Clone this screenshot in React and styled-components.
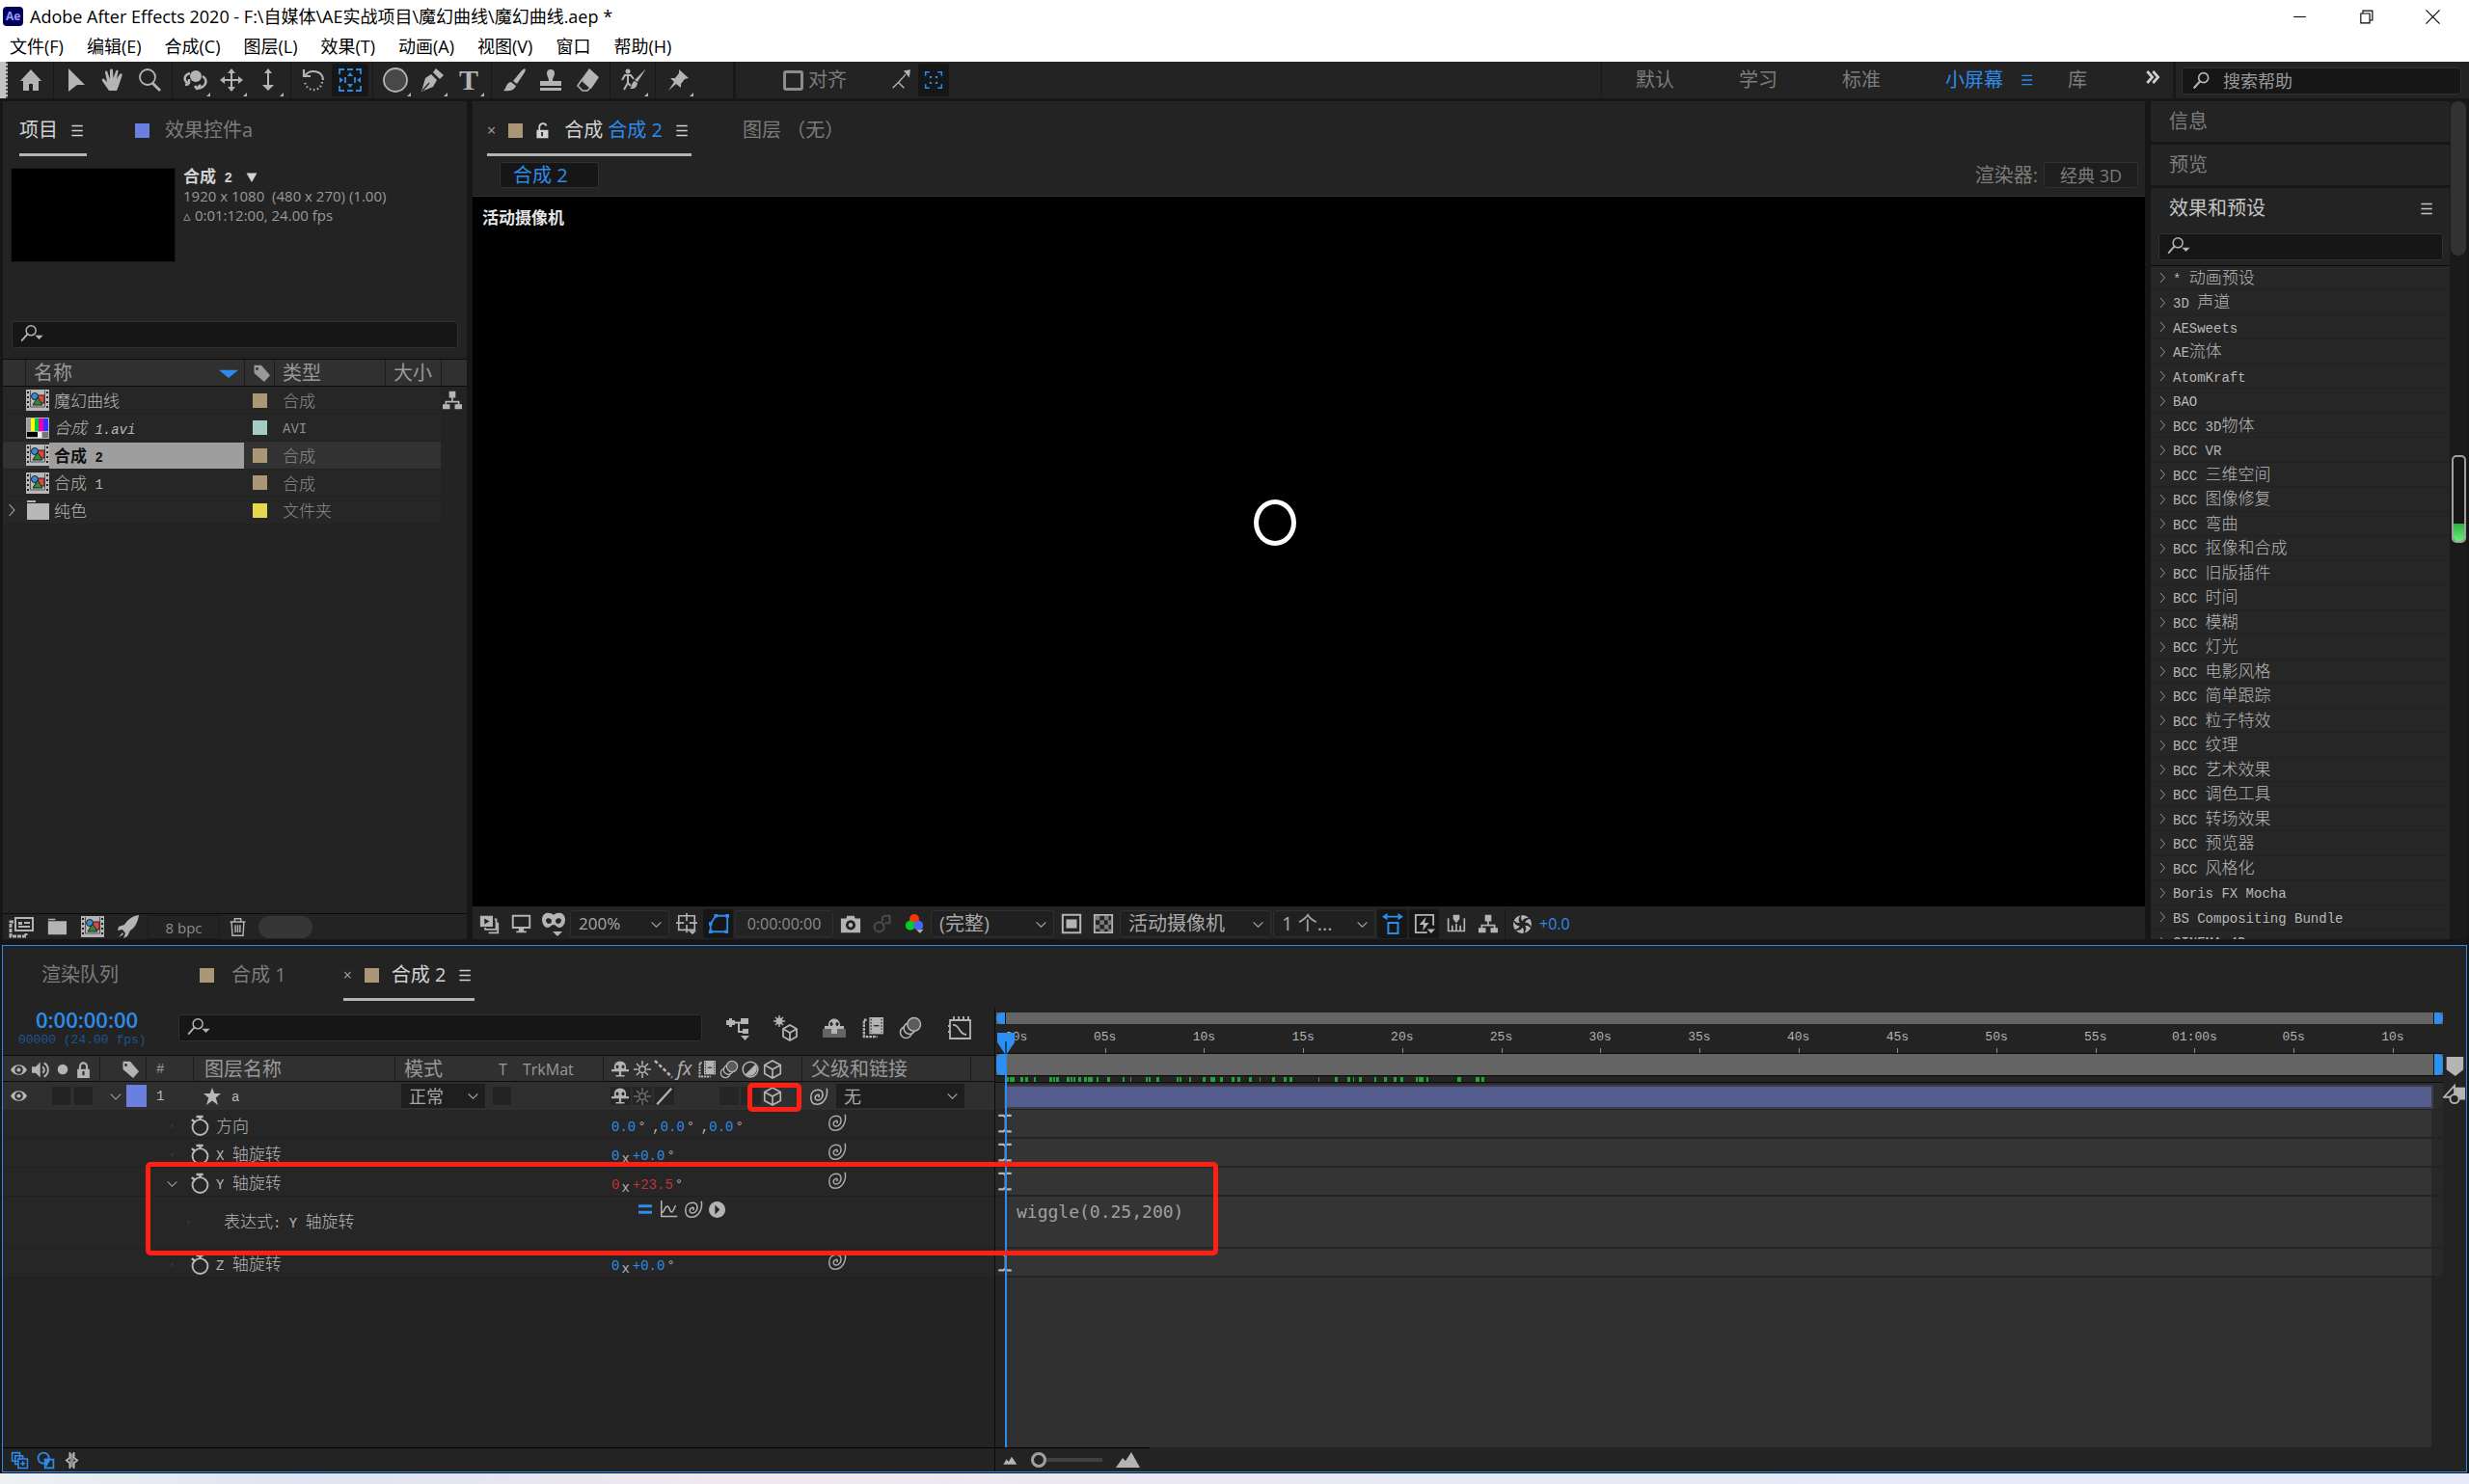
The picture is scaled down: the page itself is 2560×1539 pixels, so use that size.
import React from 'react';
import styled, { createGlobalStyle, css } from 'styled-components';

const GlobalStyle = createGlobalStyle`
  * { box-sizing: border-box; }
  html, body { margin: 0; padding: 0; }
  body {
    background: #161616;
    color: #a8a8a8;
    font-family: "Open Sans", "Noto Sans CJK SC", sans-serif;
    font-size: 18px;
    line-height: 24px;
    overflow: hidden;
  }
  button, input, select {
    font: inherit;
    color: inherit;
    margin: 0;
    padding: 0;
    border: 0;
    border-radius: 0;
    background: none;
    outline: none;
  }
  svg { display: block; flex: none; }
`

const BLUE = '#2d8ceb'
const SAND = '#ab9775'

/* ---------- text helpers ---------- */

const Half = styled.span`
  font-family: "Liberation Mono", monospace;
  font-size: 14px;
  white-space: pre;
`

// list text: full width characters at 17px, latin ones take half of that
const SongText = styled.span`
  font-family: "Noto Sans CJK SC", sans-serif;
  font-size: 17px;
  font-weight: ${p => p.$bold ? 700 : 300};
  font-style: ${p => p.$italic ? 'italic' : 'normal'};
  white-space: pre;
`

function Song({ children, bold, italic }) {
  const parts = children.match(/[\x20-\x7e]+|[^\x20-\x7e]+/g)
  return (
    <SongText $bold={bold} $italic={italic}>
      {parts.map((p, i) => /^[\x20-\x7e]/.test(p) ? <Half key={i}>{p}</Half> : p)}
    </SongText>
  )
}

/* ---------- icons ---------- */

const SvgText = styled.text`
  font-family: ${p => p.$serif ? '"Liberation Serif", serif' : '"Open Sans", sans-serif'};
  font-weight: ${p => p.$bold ? 700 : 400};
  font-style: ${p => p.$italic ? 'italic' : 'normal'};
`

const corner = <path d="M28 25v4h-4z" stroke="none" />
const line = { fill: 'none', stroke: 'currentColor' }

const ICONS = {
  home: <path d="M1 13 12 1l11 12h-3v10h-6v-7h-4v7H4V13z" />,
  arrow: <path d="M4 0l17 17h-8l-9 7z" />,
  hand: <path d="M8 23 1 13c-1-2 1-3 2-2l3 3-2-10c0-2 2-2 2.500 0L9 11 9 2c0-2 3-2 3 0l.5 8L15 3c.5-2 3-1.500 2.500 0l-1.500 8 3-5c1-1.500 3.500-.5 2.500 1.500L18 18l-2 5z" />,
  zoom: <g {...line} strokeWidth="1.800"><circle cx="10" cy="9" r="8" /><path d="M15 15l8 8" strokeWidth="2.800" /></g>,
  orbit: <g><circle cx="13" cy="8" r="6" /><path d="M7 5C0 7 0 13 6 16M6 16l-4 1M6 16l0-5M20 8c6 4 4 12-6 13l-2-3M14 21l4-4" {...line} strokeWidth="2.500" />{corner}</g>,
  pan: <g><path d="M12 0l4 5h-3v6h6V8l5 4-5 4v-3h-6v6h3l-4 5-4-5h3v-6H5v3l-5-4 5-4v3h6V5H8z" />{corner}</g>,
  dolly: <g><path d="M12 0l4 5h-3v12h5l-6 6-6-6h5V5H8z" />{corner}</g>,
  rotate: <g {...line} strokeWidth="2.200"><path d="M3 8c5-8 19-6 19 4" /><path d="M2 1v7h7" /><path d="M21 14c-1 11-17 11-18-1" strokeDasharray="1.500 2.500" /></g>,
  camera3d: <g {...line} strokeWidth="1.800"><path d="M1 6V1h5M18 1h5v5M23 18v5h-5M6 23H1v-5M9 1h6M9 23h6" /><path d="M12 4l3 4H9zM12 20l3-4H9zM1 9l4 3-4 3zM23 9l-4 3 4 3z" fill="currentColor" stroke="none" /><path d="M7 9v6M17 9v6" /></g>,
  ellipse: <g><circle cx="12" cy="12" r="12" fill="#484848" stroke="currentColor" strokeWidth="1.800" />{corner}</g>,
  pen: <g><path d="M1 24 5 10l6-4 6 6-4 7zM13 4l3-4 8 7-4 4z" /><path d="M2 23l7-8" stroke="#232323" strokeWidth="1.300" />{corner}</g>,
  type: <g><SvgText $serif $bold x="2" y="22" fontSize="30">T</SvgText>{corner}</g>,
  brush: <path d="M23 0c1 1 1 2 0 4l-8 12-4-3 9-11zM9 14l5 4c-2 5-8 6-13 5 4-3 2-8 8-9z" />,
  stamp: <path d="M8 5a4 4 0 0 1 8 0c0 3-2 4-2 8h9v5H1v-5h9c0-4-2-5-2-8zM1 20h22v3H1z" />,
  eraser: <g><path d="M14 0l10 9-8 12-10-10z" /><path d="M6 12l9 8-3 3H7l-5-5z" {...line} strokeWidth="1.600" /></g>,
  roto: <g><circle cx="7" cy="3" r="2.500" /><path d="M1 12l3-5h6l3 4M7 7v8l-4 7M7 15l3 3" {...line} strokeWidth="2" /><path d="M26 0l-9 14-3-2zM14 13l3 2c-1 6-4 6-8 6 3-2 1-6 5-8z" />{corner}</g>,
  pin: <g><path d="M13 1l10 9-4 1-4 5v4l-5-4-8 7 6-9-4-4h5l4-5z" />{corner}</g>,
  snap: <g {...line} strokeWidth="1.600"><path d="M2 22l7-7 7 7M9 15l9-10" strokeDasharray="20 2 2 2" /><path d="M17 1l6-1-1 7z" fill="currentColor" /></g>,
  snapBox: <g {...line} strokeWidth="1.800"><path d="M2 7V2h5M17 2h5v5M22 17v5h-5M7 22H2v-5" /><path d="M8 10V8h2M14 8h2v2M16 14v2h-2M10 16H8v-2" /></g>,
  search: <g {...line} strokeWidth="2"><circle cx="14" cy="8" r="6" /><path d="M10 12l-8 9" strokeWidth="2.500" /></g>,
  searchMenu: <g><circle cx="11" cy="7" r="6" {...line} strokeWidth="1.800" /><path d="M7 11l-8 9" stroke="currentColor" strokeWidth="2.200" /><path d="M16 13h10l-5 5z" /></g>,
  menu: <path d="M2 4h16v2H2zM2 11h16v2H2zM2 18h16v2H2z" />,
  chevron: <path d="M3 8l9 9 9-9" {...line} strokeWidth="2" />,
  chevronRight: <path d="M8 2l9 10-9 10" {...line} strokeWidth="2" />,
  more: <path d="M2 3l8 9-8 9M11 3l8 9-8 9" {...line} strokeWidth="4" />,
  lock: <g><path d="M3 11h18v13H3z" /><path d="M7 12V7a5 5 0 0 1 10 0v5" {...line} strokeWidth="3" /><path d="M12 14v6" stroke="#2c2c2c" strokeWidth="3" /></g>,
  unlock: <g><path d="M2 11h17v12H2z" /><path d="M6 12V7c0-7 9-7 10-2" {...line} strokeWidth="2.500" /><path d="M10 14v6" stroke="#232323" strokeWidth="2.500" /></g>,
  tag: <path fillRule="evenodd" d="M2 1l10 0 12 14-8 9L2 12zM6 4a2 2 0 1 0 .1 0z" />,
  sort: <path d="M0 8h24l-12 10z" />,
  down: <path d="M1 3h22L12 22z" />,
  tree: <path d="M8 1h8v8h-3v4h8v4h3v6h-9v-6h4v-2H5v2h4v6H0v-6h3v-4h8V9H8z" />,
  folder: <path d="M1 2h9v2H1zM1 5h23v17H1z" />,
  comp: <g><path d="M0 1h24v22H0z" /><path d="M2 3v18M22 3v18" stroke="#222" strokeWidth="2" strokeDasharray="2 3" /><path d="M4.500 2v17h15V2" fill="none" stroke="#555" /><path d="M12 7h7v8h-7z" fill="#e04444" stroke="#222" /><circle cx="9" cy="8" r="3.500" fill="#3d87dc" stroke="#222" /><path d="M12 9l5 8H7z" fill="#2a8c3b" stroke="#222" /></g>,
  bars: <g><path d="M0 1h24v22H0z" fill="#b4b4b4" /><path d="M1 2h4v13H1z" fill="#9b9b9b" /><path d="M5 2h4v13H5z" fill="#ff0" /><path d="M9 2h4v13H9z" fill="#0c3" /><path d="M13 2h5v13h-5z" fill="#e0a" /><path d="M18 2h5v13h-5z" fill="#33f" /><path d="M1 16h11v5H1z" fill="#000" /><path d="M12 16h4v6h-4z" fill="#eee" /><path d="M17 16h6v6h-6z" fill="#777" /></g>,
  interpret: <g><path d="M6 3h18v13H6z" {...line} strokeWidth="2" /><path d="M9 7h4v3H9zM15 7h6v2h-6zM9 11h12v2H9z" /><path d="M4 7H1v15h16v-3" {...line} strokeWidth="3" strokeDasharray="4 1" /></g>,
  rocket: <path d="M23 0c-7 1-12 5-15 10l-6 2-1 4 5-1 3 4-2 5 4-2 3-6c5-3 8-9 9-16zM6 18l-4 5 5-3z" />,
  trash: <g {...line} strokeWidth="1.800"><path d="M2 5h20M8 5V1h8v4M4 6l1 17h14l1-17M9 9v10M12 9v10M15 9v10" /></g>,
  preview: <g><path d="M1 2h15v13H1z" /><path d="M6 5l6 3.500L6 12z" fill="#222" /><path d="M18 6h2v12H7v-2M22 10v12H11" {...line} strokeWidth="2" /></g>,
  monitor: <g><path d="M2 2h20v14H2z" {...line} strokeWidth="2.200" /><path d="M9 17h6v3h3v2H6v-2h3z" /></g>,
  mask: <g><path fillRule="evenodd" d="M0 7c1-8 9-7 12-4 3-3 11-4 12 4 0 6-3 9-6 9s-3-3-6-3-3 3-6 3-6-3-6-9zm4 1c0 5 6 5 6 1 0-3-5-4-6-1zm10 1c0 4 6 4 6-1-1-3-6-2-6 1z" /><path d="M11 20h10l-5 5z" /></g>,
  target: <g><path d="M3 3h18v16H3zM12 0v9M12 13v9M0 11h9M15 11h9" {...line} strokeWidth="1.800" /><path d="M14 20h9l-4.500 4z" /></g>,
  path: <g {...line} strokeWidth="2"><path d="M3 21V12l6-9h13v18z" /><path d="M1 19h4v4H1zM19 19h4v4h-4zM20 1h4v4h-4zM7 1h4v4H7zM1 10h4v4H1z" fill="currentColor" stroke="none" /></g>,
  camera: <path fillRule="evenodd" d="M8 3h8l1 3h6v16H1V6h6zm4 5a5.500 5.500 0 1 0 .1 0zm0 3a2.500 2.500 0 1 1-.1 0z" />,
  showSnap: <g {...line} strokeWidth="2.500"><circle cx="8" cy="16" r="6" /><path d="M12 9V4l3-2h6v9h-6" /></g>,
  rgb: <g><circle cx="12" cy="6" r="6" fill="#f30" /><circle cx="7" cy="14" r="6" fill="#0c2" /><circle cx="17" cy="14" r="6" fill="#46f" /><path d="M14 19h10l-5 5z" stroke="#222" strokeWidth=".5" /></g>,
  roi: <g><path d="M2 2h20v20H2z" {...line} strokeWidth="2.200" /><path d="M6 7h12v10H6z" /></g>,
  checker: <g><path d="M2 2h20v20H2z" {...line} strokeWidth="2" /><path d="M3 3h5v5H3zM13 3h5v5h-5zM8 8h5v5H8zM17 8h4v5h-4zM3 13h5v5H3zM13 13h5v5h-5zM8 18h5v3H8zM17 18h4v3h-4z" opacity=".6" /></g>,
  fit: <g><path d="M0 4l6-4v3h12V0l6 4-6 4V5H6v3z" /><path d="M7 11h11v12H7z" {...line} strokeWidth="2.200" /></g>,
  fast: <g><path d="M15 22H2V2h20v12" {...line} strokeWidth="2" /><path d="M14 4l-8 9h5l-1 7 7-9h-5z" /><path d="M15 18h9l-4.500 5z" /></g>,
  timelineBtn: <g {...line} strokeWidth="2"><path d="M2 5v16h20V5M7 20v-6M12 20v-8M17 20v-6" /><path d="M8 1h8v5l-4 5-4-5z" fill="currentColor" stroke="none" /></g>,
  aperture: <g>{[0, 60, 120, 180, 240, 300].map(a => <path key={a} transform={`rotate(${a} 12 12)`} d="M11 0c4 0 7 1 9.500 4-4-.5-7 .5-8.500 4-.5-1-3-3-1-8z" />)}</g>,
  flow: <g><path d="M0 4h9v5H0zM3 2h3v9H3zM15 2h8v6h-8zM17 13h6v5h-6z" /><path d="M8 6.500h8M13 6v10h5" {...line} strokeWidth="2" /><path d="M15 20h9l-4.500 5z" /></g>,
  draft3d: <g {...line} strokeWidth="1.800"><path d="M16 9l7 4v8l-7 4-7-4v-8zM9 13l7 4 7-4M16 17v8" /><path d="M5-1v12M-1 5h12M1 1l8 8M9 1l-8 8" strokeWidth="1.500" /><circle cx="5" cy="5" r="2.500" fill="currentColor" /></g>,
  shyAll: <g><path d="M0 13h24v9H0z" opacity=".45" /><path fillRule="evenodd" d="M6 10c-1-10 13-10 12 0h4v3h-7v5H9v-5H2v-3zm3-4a1.500 2 0 1 0 .1 0zm6 0a1.500 2 0 1 0 .1 0z" /></g>,
  frameBlend: <g><path d="M8 0h16v19H8z" /><path d="M10 2v15M22 2v15" stroke="#2c2c2c" strokeDasharray="1.500 2" strokeWidth="1.500" /><path d="M13 9.500h6" stroke="#2c2c2c" strokeWidth="1.500" /><path d="M5 3H2v19h15" {...line} strokeWidth="2.600" strokeDasharray="3 1" /></g>,
  motionBlur: <g stroke="currentColor" strokeWidth="1.700"><circle cx="7" cy="17" r="6.500" fill="none" /><circle cx="11" cy="12.500" r="6.500" fill="#2c2c2c" /><circle cx="16" cy="8" r="7.500" fill="#5c5c5c" /></g>,
  graph: <g {...line} strokeWidth="1.800"><path d="M2 4h21v19H2zM6 0v4M11 0v4M16 0v4M21 0v4M0 10h2M0 16h2" /><path d="M5 9c7-1 6 10 14 10" /></g>,
  eye: <path fillRule="evenodd" d="M0 12C5 2 19 2 24 12 19 22 5 22 0 12zm12-6a6 6 0 1 0 .1 0zm0 3a3 3 0 1 1-.1 0z" />,
  speaker: <g><path d="M0 8h5l6-6v20l-6-6H0z" /><path d="M14 8c3 2 3 6 0 8M16 3c7 4 7 14 0 18" {...line} strokeWidth="2.500" /></g>,
  dot: <circle cx="12" cy="12" r="8" />,
  shy: <path fillRule="evenodd" d="M4 12c-3-15 19-15 16 0h4v3H13.500v5H18v2H6v-2h4.500v-5H0v-3zm4-6a2 2.500 0 1 0 .1 0zm8 0a2 2.500 0 1 0 .1 0z" />,
  sun: <g {...line} strokeWidth="2"><circle cx="12" cy="12" r="4.500" /><path d="M12 0v6M12 18v6M0 12h6M18 12h6M4 4l4 4M16 16l4 4M20 4l-4 4M8 16l-4 4" /></g>,
  quality: <path d="M0 0l24 23" {...line} strokeWidth="3.500" strokeDasharray="5 3" />,
  slash: <path d="M23 1L3 23" {...line} strokeWidth="3" />,
  fx: <SvgText $italic x="0" y="20" fontSize="26">fx</SvgText>,
  adjust: <g><circle cx="12" cy="12" r="10.500" {...line} strokeWidth="2" /><path d="M19 5L5 19C14 26 26 14 19 5z" /></g>,
  cube: <g {...line} strokeWidth="2.200"><path d="M12 0l11 6v12l-11 6-11-6V6zM1 6l11 6 11-6M12 12v12" /></g>,
  spiral: <path d="M23 1C25 12 19 23 9 23 3 23 1 18 1 13 1 6 6 3 11 3c6 0 7 5 6 9-1 4-5 6-8 5-3-1-3-6 1-7 2-1 4 2 1 3" {...line} strokeWidth="2" />,
  watch: <g {...line} strokeWidth="2.400"><circle cx="12" cy="14" r="10" /><path d="M7 0h9M12 0v4M1 4l4 3" strokeWidth="3" /></g>,
  star: <path d="M12 0l3 8h9l-7 6 3 10-8-6-8 6 3-10-7-6h9z" />,
  equals: <path d="M0 4h24v5H0zM0 15h24v5H0z" />,
  exprGraph: <path d="M1 0v22h22M1 17c5 0 4-9 8-9s3 8 6 8 3-6 6-9" {...line} strokeWidth="2" />,
  play: <path fillRule="evenodd" d="M12 0a12 12 0 1 0 .1 0zm-3 5l7 7-7 7z" />,
  ibeam: <path d="M3 1h7l2 2 2-2h7M3 23h7l2-2 2 2h7M13 2v20" {...line} strokeWidth="3" />,
  marker: <path d="M2 0h21v16l-10 8L2 16z" />,
  button3: <g><path d="M13 4h11v14H13z" /><path d="M0 15L12 2v13zM1 15h9" {...line} strokeWidth="2" /><circle cx="12" cy="17" r="5" fill="#232323" stroke="currentColor" strokeWidth="2" /></g>,
  panes: <g {...line} strokeWidth="2"><path d="M2 2h10v11H2zM6 6h10v11H6z" /><path d="M10 10h12v12H10z" fill="#232323" /><path d="M16 13v6M13 16h6" /></g>,
  modes: <g {...line} strokeWidth="2.200"><circle cx="9" cy="9" r="7" /><path d="M11 11h11v11H11z" /><path d="M11 11h6l-4 7z" fill="currentColor" /></g>,
  stretch: <g><path d="M9 2h6v20H9z" opacity=".7" /><path d="M9 0v8l-5 4 5 4v8M15 0v8l5 4-5 4v8" {...line} strokeWidth="2.500" /></g>,
  hillSmall: <path d="M2 19l5-8 3 4 5-8 8 12z" />,
  hillBig: <path d="M0 20l7-10 3 3 6-9 9 16z" />,
  minimize: <path d="M3 12h18" {...line} strokeWidth="1.500" />,
  restore: <path d="M4 7h13v14H4zM7 7V3h14v14h-4" {...line} strokeWidth="1.600" />,
  close: <path d="M2 2l20 20M22 2L2 22" {...line} strokeWidth="1.600" />,
}

function Icon({ name, size = 20 }) {
  return (
    <svg width={size} height={size} viewBox="0 0 24 24" fill="currentColor" overflow="visible" aria-hidden="true">
      {ICONS[name]}
    </svg>
  )
}

/* ---------- shared parts ---------- */

const Screen = styled.div`
  display: flex;
  flex-direction: column;
  height: 100vh;
`

const Panel = styled.section`
  display: flex;
  flex-direction: column;
  min-width: 0;
  min-height: 0;
  background: #232323;
`

const TabBar = styled.div`
  display: flex;
  align-items: flex-start;
  gap: ${p => p.$gap}px;
  padding-left: ${p => p.$left}px;
  flex: none;
`

const Tab = styled.button`
  display: flex;
  align-items: center;
  height: 57px;
  padding: 6px 0 0;
  gap: ${p => p.$gap || 13}px;
  font-size: 20px;
  line-height: 24px;
  white-space: pre;
  color: ${p => p.$active ? '#d2d2d2' : '#7c7c7c'};
  border-bottom: 3px solid ${p => p.$active ? '#b4b4b4' : 'transparent'};

  em {
    font-style: normal;
    color: ${BLUE};
  }
`

const Cross = styled.span`
  font-size: 16px;
  color: #a0a0a0;
`

const Swatch = styled.span`
  flex: none;
  display: block;
  width: 15px;
  height: 15px;
  background: ${p => p.$color};
`

const IconButton = styled.button`
  display: flex;
  align-items: center;
  justify-content: center;
  flex: none;
  width: ${p => p.$w || 31}px;
  height: ${p => p.$h || 30}px;
  color: ${p => p.$on || p.$blue ? BLUE : p.$dim ? '#4a4a4a' : '#b4b4b4'};
  border-radius: 3px;
  background: ${p => p.$on || p.$dark ? '#161616' : 'none'};
`

const Divider = styled.span`
  flex: none;
  width: ${p => p.$w || 1}px;
  align-self: stretch;
  margin: 0 ${p => p.$m || 0}px;
  background: #191919;
`

const SearchBox = styled.label`
  display: flex;
  align-items: center;
  gap: 10px;
  height: 28px;
  padding: 0 10px;
  border: 1px solid #303030;
  border-radius: 3px;
  background: #161616;
  color: #b4b4b4;

  input {
    flex: 1;
    min-width: 0;
    height: 24px;
    font-size: 18px;
  }
  input::placeholder { color: #999; opacity: 1; }
`

const SelectWrap = styled.span`
  position: relative;
  display: flex;
  align-items: center;
  flex: none;
  width: ${p => p.$w}px;
  height: ${p => p.$h || 28}px;
  border: ${p => p.$flat ? 0 : 1}px solid #303030;
  border-radius: ${p => p.$flat ? 0 : 3}px;
  background: ${p => p.$flat ? '#1e1e1e' : '#202020'};
  color: #a8a8a8;

  select {
    width: 100%;
    height: 100%;
    padding-left: 8px;
    appearance: none;
    font-size: ${p => p.$size || 20}px;
  }
  svg {
    position: absolute;
    right: 6px;
    pointer-events: none;
  }
`

function Select({ label, value, ...rest }) {
  return (
    <SelectWrap {...rest}>
      <select aria-label={label} defaultValue={value}><option>{value}</option></select>
      <Icon name="chevron" size={13} />
    </SelectWrap>
  )
}

const Spacer = styled.span`
  flex: 1;
`

const Twirl = styled.button`
  display: block;
  color: #999;
`

/* ---------- window frame ---------- */

const TitleBar = styled.header`
  display: flex;
  align-items: center;
  height: 34px;
  flex: none;
  padding-left: 3px;
  gap: 7px;
  background: #fff;
  color: #000;
`

const Title = styled.h1`
  flex: 1;
  margin: 0;
  font-size: 18px;
  font-weight: 400;
`

const WindowButton = styled.button`
  display: flex;
  align-items: center;
  justify-content: center;
  width: 69px;
  height: 34px;
`

const WindowButtons = styled.div`
  display: flex;
  padding-right: 3px;
`

const MenuBar = styled.nav`
  display: flex;
  flex: none;
  height: 30px;
  gap: 24px;
  padding-left: 10px;
  background: #fff;
  color: #000;

  button { height: 28px; }
`

const ToolBar = styled.div`
  display: flex;
  align-items: center;
  flex: none;
  height: 38px;
  margin-bottom: 3px;
  background: #232323;
`

const Grip = styled.span`
  width: 8px;
  align-self: stretch;
  margin-right: 5px;
  background: #c4c4c4;
  border-right: 2px dotted #555;
`

const SnapLabel = styled.label`
  display: flex;
  align-items: center;
  gap: 5px;
  margin: 0 38px 0 11px;
  font-size: 20px;
  color: #7c7c7c;

  input {
    appearance: none;
    width: 21px;
    height: 21px;
    border: 3px solid #8c8c8c;
    border-radius: 3px;
  }
`

const Workspaces = styled.div`
  display: flex;
  align-items: center;
  gap: 67px;
  padding-left: 35px;
`

const WorkspaceButton = styled.button`
  display: flex;
  align-items: center;
  gap: 18px;
  font-size: 20px;
  color: ${p => p.$on ? BLUE : '#7c7c7c'};
  margin-right: ${p => p.$on ? -34 : 0}px;
`

const MoreButton = styled.button`
  margin: 0 12px 6px 61px;
  color: #d0d0d0;
`

const HelpSearch = styled(SearchBox)`
  width: 290px;
  margin: 2px 8px 0 6px;
  gap: 12px;
`

const TOOLS = [
  ['home'],
  ['arrow', 'hand', 'zoom'],
  ['orbit', 'pan', 'dolly'],
  ['rotate', 'camera3d'],
  ['ellipse', 'pen', 'type'],
  ['brush', 'stamp', 'eraser'],
  ['roto'],
  ['pin'],
]

function Tools() {
  return (
    <ToolBar>
      <Grip />
      {TOOLS.map((group, i) => (
        <React.Fragment key={i}>
          {i > 0 && <Divider $m={4} />}
          {group.map(name => (
            <IconButton key={name} $w={38} $h={34} $on={name === 'camera3d'} aria-label={name}>
              <Icon name={name} size={24} />
            </IconButton>
          ))}
        </React.Fragment>
      ))}
      <Divider $w={3} $m={38} />
      <SnapLabel><input type="checkbox" />对齐</SnapLabel>
      <IconButton $w={36} $h={34} aria-label="snap edges"><Icon name="snap" /></IconButton>
      <IconButton $w={32} $h={34} $on aria-label="snap features"><Icon name="snapBox" /></IconButton>
      <Spacer />
      <Divider />
      <Workspaces>
        <WorkspaceButton>默认</WorkspaceButton>
        <WorkspaceButton>学习</WorkspaceButton>
        <WorkspaceButton>标准</WorkspaceButton>
        <WorkspaceButton $on>小屏幕 <Icon name="menu" size={16} /></WorkspaceButton>
        <WorkspaceButton>库</WorkspaceButton>
      </Workspaces>
      <MoreButton aria-label="more workspaces"><Icon name="more" size={16} /></MoreButton>
      <Divider $w={3} />
      <HelpSearch>
        <Icon name="search" />
        <input aria-label="搜索帮助" placeholder="搜索帮助" />
      </HelpSearch>
    </ToolBar>
  )
}

/* ---------- project panel ---------- */

const Main = styled.main`
  display: flex;
  flex: 1;
  min-height: 0;
  gap: 6px;
  padding: 0 2px 0 3px;
`

const ProjectPanel = styled(Panel)`
  width: 481px;
  flex: none;
`

const CompInfo = styled.div`
  display: flex;
  gap: 8px;
  padding: 12px 8px 0;
  font-size: 15px;
  line-height: 20px;
  white-space: pre;

  p { margin: 0; color: #999; }
`

const Thumb = styled.div`
  width: 171px;
  height: 98px;
  background: #000;
  border: 1px solid #1a1a1a;
`

const CompName = styled.h2`
  display: flex;
  align-items: center;
  gap: 14px;
  height: 19px;
  margin: 0;
  line-height: 19px;
  font-weight: 400;
  color: #d2d2d2;
`

const ProjectSearch = styled(SearchBox)`
  margin: 61px 9px 11px;
  flex: none;
`

const ProjectTable = styled.table`
  width: 100%;
  table-layout: fixed;
  border-collapse: collapse;

  th {
    height: 28px;
    padding: 0 0 0 9px;
    text-align: left;
    font-size: 20px;
    font-weight: 400;
    line-height: 24px;
    color: #999;
    background: #303030;
    border-top: 1px solid #0c0c0c;
    border-bottom: 1px solid #0c0c0c;
  }
  th + th { box-shadow: inset 1px 0 #1c1c1c; }
  td {
    height: 29px;
    padding: 0 0 0 9px;
    line-height: 24px;
    color: #8c8c8c;
    border-bottom: 1px solid #212121;
  }
  tr:nth-child(even) td { height: 28px; }
`

const NameHead = styled.span`
  display: flex;
  align-items: center;
  justify-content: space-between;
  padding-right: 6px;

  svg { color: ${BLUE}; }
`

const ItemRow = styled.tr`
  td:not(:last-child) { background: ${p => p.$selected ? '#323232' : '#262626'}; }
`

const NameCell = styled.div`
  display: flex;
  align-items: center;
  margin-left: -8px;
  color: #b8b8b8;
`

const ItemName = styled.span`
  flex: 1;
  min-width: 0;
  height: 27px;
  padding-left: 5px;
  line-height: 26px;
  color: ${p => p.$selected ? '#111' : 'inherit'};
  background: ${p => p.$selected ? '#9e9e9e' : 'none'};
`

const EdgeButton = styled(Twirl)`
  margin-left: -7px;
  color: ${p => p.$bright ? '#b4b4b4' : '#999'};
`

const PanelFooter = styled.footer`
  display: flex;
  align-items: center;
  flex: none;
  height: 27px;
  border-top: 1px solid #0c0c0c;
`

const BpcButton = styled.button`
  width: 75px;
  height: 25px;
  margin-left: 2px;
  font-size: 15px;
  color: #8c8c8c;
  border: 1px solid #1a1a1a;
`

const ScrollPill = styled.span`
  width: 56px;
  height: 23px;
  margin-left: 3px;
  border-radius: 12px;
  background: #363636;
`

const ITEMS = [
  { icon: 'comp', name: '魔幻曲线', color: SAND, type: '合成', tree: true },
  { icon: 'bars', name: '合成 1.avi', color: '#a5cbc5', type: 'AVI', italic: true },
  { icon: 'comp', name: '合成 2', color: SAND, type: '合成', selected: true },
  { icon: 'comp', name: '合成 1', color: SAND, type: '合成' },
  { icon: 'folder', name: '纯色', color: '#e6d84c', type: '文件夹', twirl: true },
]

function Project() {
  return (
    <ProjectPanel>
      <TabBar $left={17} $gap={50}>
        <Tab $active>项目<Icon name="menu" size={17} /></Tab>
        <Tab $gap={16}><Swatch $color="#6a7fe0" />效果控件a</Tab>
      </TabBar>
      <CompInfo>
        <Thumb />
        <div>
          <CompName><Song bold>合成 2</Song><Icon name="down" size={12} /></CompName>
          <p>1920 x 1080  (480 x 270) (1.00)</p>
          <p>▵ 0:01:12:00, 24.00 fps</p>
        </div>
      </CompInfo>
      <ProjectSearch><Icon name="searchMenu" /><input aria-label="搜索项目" /></ProjectSearch>
      <ProjectTable>
        <colgroup>
          <col width="23" /><col width="227" /><col width="31" /><col width="115" /><col width="58" /><col />
        </colgroup>
        <thead>
          <tr>
            <th />
            <th><NameHead>名称<Icon name="sort" /></NameHead></th>
            <th><Icon name="tag" size={18} /></th>
            <th>类型</th>
            <th>大小</th>
            <th />
          </tr>
        </thead>
        <tbody>
          {ITEMS.map(it => (
            <ItemRow key={it.name} $selected={it.selected}>
              <td>{it.twirl && <EdgeButton aria-label="展开"><Icon name="chevronRight" size={14} /></EdgeButton>}</td>
              <td>
                <NameCell>
                  <Icon name={it.icon} size={24} />
                  <ItemName $selected={it.selected}><Song bold={it.selected} italic={it.italic}>{it.name}</Song></ItemName>
                </NameCell>
              </td>
              <td><Swatch $color={it.color} /></td>
              <td><Song>{it.type}</Song></td>
              <td />
              <td>{it.tree && <EdgeButton $bright aria-label="流程图"><Icon name="tree" size={20} /></EdgeButton>}</td>
            </ItemRow>
          ))}
        </tbody>
      </ProjectTable>
      <Spacer />
      <PanelFooter>
        {['interpret', 'folder', 'comp', 'rocket'].map(n => (
          <IconButton key={n} $w={37} $h={26} aria-label={n}><Icon name={n} size={n === 'folder' ? 20 : 24} /></IconButton>
        ))}
        <BpcButton>8 bpc</BpcButton>
        <IconButton $w={37} $h={26} aria-label="删除"><Icon name="trash" size={19} /></IconButton>
        <ScrollPill />
      </PanelFooter>
    </ProjectPanel>
  )
}

/* ---------- composition viewer ---------- */

const ViewerPanel = styled(Panel)`
  flex: 1;
`

const CrumbRow = styled.div`
  display: flex;
  align-items: center;
  justify-content: space-between;
  padding: 6px 7px 8px 28px;
  border-bottom: 1px solid #303030;
`

const Crumb = styled.button`
  width: 103px;
  height: 27px;
  padding-left: 13px;
  text-align: left;
  font-size: 20px;
  color: ${BLUE};
  background: #161616;
  border: 1px solid #303030;
  border-radius: 3px;
`

const Renderer = styled.div`
  display: flex;
  align-items: center;
  gap: 6px;
  font-size: 20px;
  color: #7c7c7c;

  button {
    width: 98px;
    height: 27px;
    font-size: 18px;
    border: 1px solid #303030;
    border-radius: 3px;
    background: #1e1e1e;
  }
`

const Stage = styled.div`
  position: relative;
  flex: 1;
  min-height: 0;
  padding: 10px;
  background: #000;
  color: #e6e6e6;
  font-size: 17px;
  font-weight: 700;
`

const Ring = styled.span`
  position: absolute;
  left: 48%;
  top: 46%;
  width: 44px;
  height: 48px;
  margin: -25px 0 0 -22px;
  border: 5px solid #fff;
  border-radius: 50%;
`

const ViewerBar = styled.footer`
  display: flex;
  align-items: center;
  flex: none;
  gap: 2px;
  height: 34px;
  padding: 2px 0 0 2px;
`

const TimeBox = styled.button`
  width: 102px;
  height: 28px;
  font-size: 16px;
  color: #8c8c8c;
  border: 1px solid #303030;
  border-radius: 3px;
`

const Exposure = styled.button`
  font-size: 16px;
  color: ${BLUE};
`

function Viewer() {
  return (
    <ViewerPanel>
      <TabBar $left={15} $gap={53}>
        <Tab $active>
          <Cross>×</Cross>
          <Swatch $color={SAND} />
          <Icon name="unlock" size={17} />
          <span>合成 <em>合成 2</em></span>
          <Icon name="menu" size={17} />
        </Tab>
        <Tab>图层 （无）</Tab>
      </TabBar>
      <CrumbRow>
        <Crumb>合成 2</Crumb>
        <Renderer>渲染器: <button>经典 3D</button></Renderer>
      </CrumbRow>
      <Stage>
        活动摄像机
        <Ring />
      </Stage>
      <ViewerBar>
        <IconButton aria-label="预览"><Icon name="preview" size={21} /></IconButton>
        <IconButton aria-label="主查看器"><Icon name="monitor" size={21} /></IconButton>
        <IconButton aria-label="VR"><Icon name="mask" size={24} /></IconButton>
        <Select label="放大率" value="200%" $w={103} $size={17} />
        <IconButton aria-label="网格"><Icon name="target" size={22} /></IconButton>
        <IconButton $on aria-label="蒙版"><Icon name="path" size={22} /></IconButton>
        <TimeBox>0:00:00:00</TimeBox>
        <IconButton aria-label="快照"><Icon name="camera" size={22} /></IconButton>
        <IconButton $dim aria-label="显示快照"><Icon name="showSnap" size={20} /></IconButton>
        <IconButton aria-label="通道"><Icon name="rgb" size={20} /></IconButton>
        <Select label="分辨率" value="(完整)" $w={128} />
        <IconButton aria-label="目标区域"><Icon name="roi" size={22} /></IconButton>
        <IconButton aria-label="透明网格"><Icon name="checker" size={22} /></IconButton>
        <Select label="视图" value="活动摄像机" $w={157} />
        <Select label="视图布局" value="1 个..." $w={106} />
        <IconButton $on aria-label="像素长宽比"><Icon name="fit" size={22} /></IconButton>
        <IconButton $dark aria-label="快速预览"><Icon name="fast" size={22} /></IconButton>
        <IconButton aria-label="时间轴"><Icon name="timelineBtn" size={20} /></IconButton>
        <IconButton aria-label="流程图"><Icon name="tree" size={20} /></IconButton>
        <Divider />
        <IconButton aria-label="重置曝光度"><Icon name="aperture" size={19} /></IconButton>
        <Exposure>+0.0</Exposure>
      </ViewerBar>
    </ViewerPanel>
  )
}

/* ---------- effects panel ---------- */

const SideColumn = styled.aside`
  display: flex;
  flex: none;
  width: 328px;
  min-height: 0;
`

const SideStack = styled.div`
  display: flex;
  flex-direction: column;
  flex: 1;
  min-height: 0;
  gap: 3px;
`

const SideTitle = styled.h2`
  display: flex;
  align-items: center;
  justify-content: space-between;
  flex: none;
  height: 42px;
  margin: 0;
  padding: 0 14px 0 19px;
  font-size: 20px;
  font-weight: 400;
  color: ${p => p.$active ? '#c4c4c4' : '#7c7c7c'};
  background: #232323;
`

const EffectsPanel = styled(Panel)`
  flex: 1;
`

const EffectSearch = styled(SearchBox)`
  flex: none;
  margin: 5px 7px 5px 8px;
`

const EffectList = styled.ul`
  flex: 1;
  min-height: 0;
  overflow: hidden;
  margin: 0;
  padding: 0;
  list-style: none;
  border-top: 1px solid #0c0c0c;
  background: #262626;
`

const EffectItem = styled.li`
  display: flex;
  align-items: center;
  gap: 5px;
  height: 25px;
  padding-left: 6px;
  color: #b8b8b8;
  border-bottom: 1px solid #212121;

  &:nth-child(even) { height: 26px; }
`

const SideScroll = styled.div`
  width: 18px;
  background: #1a1a1a;
`

const SideThumb = styled.div`
  width: 16px;
  height: 160px;
  margin-left: 1px;
  border-radius: 8px;
  background: #323232;
`

const Gauge = styled.div`
  display: flex;
  align-items: flex-end;
  width: 15px;
  height: 91px;
  margin: 207px 0 0 2px;
  border: 2px solid #a0a0a0;
  border-radius: 5px;
  background: #161616;

  span {
    flex: 1;
    height: 18px;
    border-radius: 0 0 3px 3px;
    background: linear-gradient(#2fae45, #6bec78);
  }
`

const EFFECTS = [
  '* 动画预设', '3D 声道', 'AESweets', 'AE流体', 'AtomKraft', 'BAO', 'BCC 3D物体', 'BCC VR',
  'BCC 三维空间', 'BCC 图像修复', 'BCC 弯曲', 'BCC 抠像和合成', 'BCC 旧版插件', 'BCC 时间',
  'BCC 模糊', 'BCC 灯光', 'BCC 电影风格', 'BCC 简单跟踪', 'BCC 粒子特效', 'BCC 纹理',
  'BCC 艺术效果', 'BCC 调色工具', 'BCC 转场效果', 'BCC 预览器', 'BCC 风格化',
  'Boris FX Mocha', 'BS Compositing Bundle', 'CINEMA 4D',
]

function Effects() {
  return (
    <SideColumn>
      <SideStack>
        <SideTitle>信息</SideTitle>
        <SideTitle>预览</SideTitle>
        <EffectsPanel>
          <SideTitle $active>效果和预设<Icon name="menu" size={17} /></SideTitle>
          <EffectSearch><Icon name="searchMenu" /><input aria-label="搜索效果" /></EffectSearch>
          <EffectList>
            {EFFECTS.map(name => (
              <EffectItem key={name}>
                <Twirl aria-label="展开"><Icon name="chevronRight" size={12} /></Twirl>
                <Song>{name}</Song>
              </EffectItem>
            ))}
          </EffectList>
        </EffectsPanel>
      </SideStack>
      <SideScroll>
        <SideThumb />
        <Gauge><span /></Gauge>
      </SideScroll>
    </SideColumn>
  )
}

/* ---------- timeline: layer outline ---------- */

const TimelinePanel = styled(Panel)`
  flex: none;
  margin: 6px 2px 1px;
  border: 1px solid ${BLUE};
`

const TabPair = styled.div`
  display: flex;
  gap: 59px;
`

const TimelineBody = styled.div`
  position: relative;
  display: flex;
  padding-top: 7px;
`

const Outline = styled.div`
  flex: none;
  width: 1028px;
`

const ControlRow = styled.div`
  display: flex;
  align-items: center;
  height: 49px;
  padding: 0 9px 8px 16px;
`

const TimeCode = styled.div`
  display: flex;
  flex-direction: column;
  width: 166px;
  color: ${BLUE};

  b {
    padding-left: 18px;
    font-size: 22px;
    font-weight: 600;
    line-height: 26px;
  }
  small {
    font-family: "Liberation Mono", monospace;
    font-size: 13px;
    line-height: 18px;
    color: #1d5590;
  }
`

const LayerSearch = styled(SearchBox)`
  flex: 1;
  margin-right: 12px;
`

const columns = css`
  display: grid;
  grid-template-columns: 101px 48px 49px 209px 216px 206px 175px 1fr;
`

const HeadRow = styled.div`
  ${columns}
  height: 28px;
  background: #303030;
  border-top: 1px solid #0c0c0c;
  border-bottom: 1px solid #0c0c0c;
  color: #999;
  font-size: 20px;
`

const LayerRow = styled.div`
  ${columns}
  height: 29px;
  background: #2f2f2f;
  color: #b8b8b8;
`

const Cell = styled.div`
  display: flex;
  align-items: center;
  min-width: 0;
  gap: ${p => p.$gap || 0}px;
  padding-left: ${p => p.$pad || 0}px;
  color: ${p => p.$icons ? '#b4b4b4' : 'inherit'};
  box-shadow: ${p => p.$rule ? 'inset -1px 0 #1c1c1c' : 'none'};
`

const ModeHead = styled.span`
  width: 98px;
`

const SmallHead = styled.span`
  width: ${p => p.$w}px;
  font-size: 16px;
`

const Switches = styled.div`
  display: flex;
  padding: 0 20px 0 6px;
  color: #b4b4b4;
  box-shadow: ${p => p.$rule ? 'inset -1px 0 #1c1c1c' : 'none'};
`

const Switch = styled.span`
  position: relative;
  display: flex;
  flex: 1;
  align-items: center;
  justify-content: center;
  margin: 5px 1px;
  color: ${p => p.$dim ? '#6e6e6e' : 'inherit'};
  background: ${p => p.$well ? '#252525' : 'none'};
`

const Well = styled.span`
  width: 19px;
  height: 19px;
  margin-left: ${p => p.$ml || 0}px;
  background: #232323;
`

const LayerColor = styled.span`
  width: 23px;
  height: 23px;
  background: #6a7fe0;
`

const PropRow = styled.div`
  display: grid;
  grid-template-columns: 623px 206px 1fr;
  height: ${p => p.$tall ? 54 : 30}px;
  background: #262626;
  border-bottom: 1px solid #202020;
  color: #b8b8b8;
`

const PropName = styled.div`
  display: flex;
  align-items: center;
  gap: 7px;
  padding-left: 162px;
`

const TwirlSlot = styled.span`
  display: flex;
  justify-content: center;
  width: ${p => p.$w || 26}px;
`

const Dot = styled.i`
  width: 3px;
  height: 3px;
  background: #333;
`

const PropValue = styled.div`
  padding: 4px 0 0 8px;
  font-family: "Liberation Mono", monospace;
  font-size: 14px;
  line-height: 28px;
  white-space: pre;
  color: ${p => p.$expr ? '#c4303a' : BLUE};

  i {
    display: inline-block;
    font-style: normal;
    color: #b4b4b4;
  }
`

const Degree = styled.i`
  width: 17px;
  padding-left: 2px;
`

const Turns = styled.i`
  position: relative;
  top: 3px;
  padding: 0 3px 0 2px;
`

const ExprIcons = styled.div`
  display: flex;
  align-items: center;
  align-self: start;
  gap: 2px;
  padding-left: 31px;

  button { width: 23px; height: 26px; }
`

const Whip = styled.span`
  padding: 4px 0 0 27px;
  color: #a8a8a8;
`

const OutlineRest = styled.div`
  height: 176px;
`

const OutlineFooter = styled.div`
  display: flex;
  align-items: center;
  height: 25px;
  padding-left: 4px;
  border-top: 1px solid #000;
`

const RedBox = styled.span`
  position: absolute;
  border: 5px solid #ff2015;
  border-radius: 5px;
`

const CubeMark = styled(RedBox)`
  left: -16px;
  top: -4px;
  width: 56px;
  height: 30px;
`

const ExpressionMark = styled(RedBox)`
  left: 148px;
  top: 167px;
  width: 1112px;
  height: 97px;
`

const HEAD_SWITCHES = ['shy', 'sun', 'quality', 'fx', 'frameBlend', 'motionBlur', 'adjust', 'cube']

const TIMELINE_TOOLS = [
  ['flow', 50, 24], ['draft3d', 50, 24], ['shyAll', 50, 24],
  ['frameBlend', 30, 22], ['motionBlur', 48, 22], ['graph', 54, 24],
]

function Rotation({ value }) {
  return <>0<Turns>x</Turns>{value}<Degree>°</Degree></>
}

function Property({ name, children, expr }) {
  return (
    <PropRow>
      <PropName>
        <TwirlSlot>{expr ? <Twirl aria-label="折叠"><Icon name="chevron" size={13} /></Twirl> : <Dot />}</TwirlSlot>
        <Icon name="watch" size={19} />
        <Song>{name}</Song>
      </PropName>
      <PropValue $expr={expr}>{children}</PropValue>
      <Whip><Icon name="spiral" size={18} /></Whip>
    </PropRow>
  )
}

function LayerOutline() {
  return (
    <Outline>
      <ControlRow>
        <TimeCode><b>0:00:00:00</b><small>00000 (24.00 fps)</small></TimeCode>
        <LayerSearch><Icon name="searchMenu" /><input aria-label="搜索图层" /></LayerSearch>
        {TIMELINE_TOOLS.map(([name, w, size]) => (
          <IconButton key={name} $w={w} $h={34} aria-label={name}><Icon name={name} size={size} /></IconButton>
        ))}
      </ControlRow>
      <HeadRow>
        <Cell $icons $rule $pad={8} $gap={5}>
          <Icon name="eye" size={17} /><Icon name="speaker" size={19} /><Icon name="dot" size={16} /><Icon name="lock" size={17} />
        </Cell>
        <Cell $icons $rule $pad={22}><Icon name="tag" size={18} /></Cell>
        <Cell $rule $pad={10}><Half>#</Half></Cell>
        <Cell $rule $pad={11}>图层名称</Cell>
        <Cell $rule $pad={9}><ModeHead>模式</ModeHead><SmallHead $w={25}>T</SmallHead><SmallHead>TrkMat</SmallHead></Cell>
        <Switches $rule>
          {HEAD_SWITCHES.map(n => <Switch key={n}><Icon name={n} size={18} /></Switch>)}
        </Switches>
        <Cell $rule $pad={9}>父级和链接</Cell>
        <Cell />
      </HeadRow>
      <LayerRow>
        <Cell $pad={8}><Icon name="eye" size={17} /><Well $ml={26} /><Well $ml={4} /></Cell>
        <Cell $pad={9} $gap={4}><Twirl aria-label="折叠"><Icon name="chevron" size={14} /></Twirl><LayerColor /></Cell>
        <Cell $pad={10}><Half>1</Half></Cell>
        <Cell $pad={10} $gap={11}><Icon name="star" size={18} /><Song>a</Song></Cell>
        <Cell $pad={6} $gap={8}>
          <Select label="模式" value="正常" $flat $w={87} $h={25} $size={18} />
          <Well />
        </Cell>
        <Switches>
          <Switch $well><Icon name="shy" size={18} /></Switch>
          <Switch $well $dim><Icon name="sun" size={18} /></Switch>
          <Switch $well><Icon name="slash" size={18} /></Switch>
          <Switch />
          <Switch />
          <Switch $well />
          <Switch $well />
          <Switch><Icon name="cube" size={18} /><CubeMark /></Switch>
        </Switches>
        <Cell $pad={8} $gap={9}>
          <Icon name="spiral" size={18} />
          <Select label="父级和链接" value="无" $flat $w={133} $h={25} $size={18} />
        </Cell>
        <Cell />
      </LayerRow>
      <Property name="方向">
        0.0<Degree>°</Degree><i>,</i>0.0<Degree>°</Degree><i>,</i>0.0<Degree>°</Degree>
      </Property>
      <Property name="X 轴旋转"><Rotation value="+0.0" /></Property>
      <Property name="Y 轴旋转" expr><Rotation value="+23.5" /></Property>
      <PropRow $tall>
        <PropName>
          <TwirlSlot $w={60}><Dot /></TwirlSlot>
          <Song>表达式: Y 轴旋转</Song>
        </PropName>
        <ExprIcons>
          <IconButton $blue aria-label="启用表达式"><Icon name="equals" size={14} /></IconButton>
          <IconButton aria-label="表达式图表"><Icon name="exprGraph" size={18} /></IconButton>
          <IconButton aria-label="表达式关联器"><Icon name="spiral" size={18} /></IconButton>
          <IconButton aria-label="表达式语言菜单"><Icon name="play" size={17} /></IconButton>
        </ExprIcons>
      </PropRow>
      <Property name="Z 轴旋转"><Rotation value="+0.0" /></Property>
      <OutlineRest />
      <OutlineFooter>
        <IconButton $blue $w={27} $h={24} aria-label="图层开关"><Icon name="panes" size={19} /></IconButton>
        <IconButton $blue $w={27} $h={24} aria-label="转换控制"><Icon name="modes" size={19} /></IconButton>
        <IconButton $w={27} $h={24} aria-label="入点出点"><Icon name="stretch" size={17} /></IconButton>
      </OutlineFooter>
    </Outline>
  )
}

/* ---------- timeline: tracks ---------- */

const Tracks = styled.div`
  position: relative;
  flex: 1;
  min-width: 0;
  border-left: 1px solid #0c0c0c;
`

const RangeBar = styled.div`
  display: flex;
  justify-content: space-between;
  height: ${p => p.$line ? 24 : 12}px;
  margin: ${p => p.$line ? 0 : 5}px 0 1px 1px;
  background: #646464;
  border: solid #0c0c0c;
  border-width: ${p => p.$line ? '1px 0' : 0};
`

const RangeEnd = styled.span`
  width: 10px;
  background: #2d8ff0;
  border-radius: ${p => p.$right ? '0 6px 6px 0' : '6px 0 0 6px'};
  border-${p => p.$right ? 'left' : 'right'}: 1px solid #111;
`

const Ruler = styled.div`
  display: flex;
  height: 29px;
  padding: 0 11px;
`

const RulerCell = styled.div`
  flex: ${p => p.$seconds} 1 0;
  display: flex;
  flex-direction: column;
  justify-content: space-between;
  min-width: 0;
  font-family: "Liberation Mono", monospace;
  font-size: 13px;
  line-height: 22px;
  color: #b4b4b4;

  span {
    width: 60px;
    margin-left: ${p => p.$first ? -1 : -30}px;
    padding-top: 2px;
    text-align: ${p => p.$first ? 'left' : 'center'};
  }
  i {
    width: 1px;
    height: 5px;
    background: #8c8c8c;
  }
`

const CacheStrip = styled.svg`
  width: 100%;
  height: 5px;
  padding-left: 11px;
  fill: #22a33a;
`

const Lane = styled.div`
  height: ${p => p.$tall ? 54 : 30}px;
  padding: 0 12px 0 11px;
  border-bottom: 2px solid #232323;
  background: linear-gradient(#343434, #343434) content-box, #282828;
`

const LaneRest = styled.div`
  height: 176px;
  padding: 0 12px 0 11px;
  background: linear-gradient(#303030, #303030) content-box, #232323;
`

const LayerLane = styled.div`
  height: 29px;
  padding: 4px 12px 3px 11px;
  border-top: 1px solid #0c0c0c;
  border-bottom: 1px solid #232323;
  background: #2b2b2b;
`

const LayerBar = styled.div`
  height: 21px;
  background: #545c8e;
  box-shadow: 0 0 0 2px #3c3d48;
`

const Keyable = styled.span`
  display: block;
  width: 20px;
  height: 28px;
  margin-left: -10px;
  padding-top: 5px;
  color: #b4b4b4;
`

const Expression = styled.input`
  display: block;
  width: 300px;
  height: 30px;
  margin-left: 11px;
  font-family: "DejaVu Sans Mono", monospace;
  font-size: 18px;
  color: #a0a0a0;
`

const ZoomBar = styled.div`
  display: flex;
  align-items: center;
  gap: 14px;
  width: 160px;
  height: 25px;
  padding-left: 7px;
  color: #b4b4b4;
  border-top: 1px solid #000;

  input {
    appearance: none;
    width: 74px;
    height: 20px;
    background: linear-gradient(#404040, #404040) center / 100% 4px no-repeat;
  }
  input::-webkit-slider-thumb {
    appearance: none;
    width: 16px;
    height: 16px;
    border: 3px solid #a0a0a0;
    border-radius: 50%;
    background: #232323;
  }
`

const Playhead = styled.div`
  position: absolute;
  left: 2px;
  top: 26px;
  bottom: 25px;
  display: flex;
  flex-direction: column;
  align-items: center;
  width: 18px;
  color: #2d8ff0;

  &::after {
    content: "";
    flex: 1;
    width: 2px;
    background: #2d8ceb;
  }
`

const Rail = styled.div`
  flex: none;
  display: flex;
  flex-direction: column;
  align-items: center;
  gap: 8px;
  width: 24px;
  padding-top: 51px;
  color: #b4b4b4;
`

const CACHED = [
  [1, 2], [4, 5], [15, 3], [20, 3], [29, 2], [45, 3], [49, 2], [52, 3], [63, 3], [67, 2], [70, 2],
  [75, 3], [81, 3], [85, 5], [94, 2], [105, 3], [121, 2], [129, 1], [145, 2], [148, 2], [156, 3],
  [177, 2], [180, 2], [190, 2], [204, 3], [212, 5], [222, 3], [234, 3], [240, 3], [252, 3], [263, 1],
  [276, 3], [288, 3], [294, 3], [324, 1], [341, 3], [354, 3], [360, 1], [366, 3], [382, 2], [392, 3],
  [402, 3], [409, 3], [425, 2], [428, 5], [436, 2], [468, 4], [487, 4], [493, 3],
]

const RULER = [
  '00s', '05s', '10s', '15s', '20s', '25s', '30s', '35s', '40s', '45s', '50s', '55s', '01:00s', '05s', '10s',
]

function EmptyLane() {
  return <Lane><Keyable><Icon name="ibeam" size={18} /></Keyable></Lane>
}

function TrackArea() {
  return (
    <Tracks>
      <RangeBar><RangeEnd /><RangeEnd $right /></RangeBar>
      <Ruler>
        {RULER.map((t, i) => (
          <RulerCell key={i} $first={i === 0} $seconds={i === 14 ? 2 : 5}><span>{t}</span><i /></RulerCell>
        ))}
      </Ruler>
      <RangeBar $line><RangeEnd /><RangeEnd $right /></RangeBar>
      <CacheStrip aria-hidden="true">
        {CACHED.map(([x, w]) => <rect key={x} x={x} width={w} height="5" />)}
      </CacheStrip>
      <LayerLane><LayerBar /></LayerLane>
      <EmptyLane />
      <EmptyLane />
      <EmptyLane />
      <Lane $tall><Expression aria-label="表达式" defaultValue="wiggle(0.25,200)" /></Lane>
      <EmptyLane />
      <LaneRest />
      <ZoomBar>
        <Icon name="hillSmall" size={16} />
        <input type="range" aria-label="时间缩放" min="0" max="100" defaultValue="0" />
        <Icon name="hillBig" size={24} />
      </ZoomBar>
      <Playhead>
        <svg width="18" height="22" viewBox="0 0 18 22" fill="currentColor"><path d="M0 0h18v10l-8 12H8L0 10z" /><path d="M9 9v13" stroke="#15467a" strokeWidth="2" /></svg>
      </Playhead>
    </Tracks>
  )
}

const Taskbar = styled.div`
  flex: none;
  height: 11px;
  background: linear-gradient(90deg, #eef0f2, #dfe4f2 12%, #f0e8ee 30%, #e6e8f6 60%, #e8ecfa);
`

const MENUS = ['文件(F)', '编辑(E)', '合成(C)', '图层(L)', '效果(T)', '动画(A)', '视图(V)', '窗口', '帮助(H)']

export default function App() {
  return (
    <Screen>
      <GlobalStyle />
      <TitleBar>
        <svg width="21" height="20" viewBox="0 0 21 20">
          <rect width="21" height="20" rx="4" fill="#00005b" />
          <SvgText $bold x="3" y="14" fontSize="12" fill="#9999ff">Ae</SvgText>
        </svg>
        <Title>Adobe After Effects 2020 - F:\自媒体\AE实战项目\魔幻曲线\魔幻曲线.aep *</Title>
        <WindowButtons>
          {['minimize', 'restore', 'close'].map(n => (
            <WindowButton key={n} aria-label={n}><Icon name={n} size={17} /></WindowButton>
          ))}
        </WindowButtons>
      </TitleBar>
      <MenuBar>{MENUS.map(m => <button key={m}>{m}</button>)}</MenuBar>
      <Tools />
      <Main>
        <Project />
        <Viewer />
        <Effects />
      </Main>
      <TimelinePanel>
        <TabBar $left={40} $gap={84}>
          <Tab>渲染队列</Tab>
          <TabPair>
            <Tab $gap={18}><Swatch $color={SAND} />合成 1</Tab>
            <Tab $active><Cross>×</Cross><Swatch $color={SAND} />合成 2<Icon name="menu" size={17} /></Tab>
          </TabPair>
        </TabBar>
        <TimelineBody>
          <LayerOutline />
          <TrackArea />
          <Rail>
            <Icon name="marker" size={20} />
            <Icon name="button3" size={22} />
          </Rail>
          <ExpressionMark />
        </TimelineBody>
      </TimelinePanel>
      <Taskbar />
    </Screen>
  )
}
